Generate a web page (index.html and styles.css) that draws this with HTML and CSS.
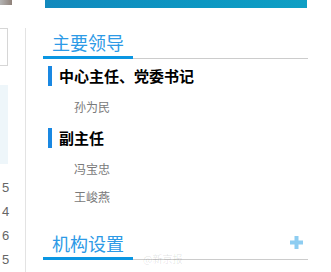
FILE: index.html
```html
<!DOCTYPE html>
<html lang="zh">
<head>
<meta charset="utf-8">
<link rel="stylesheet" href="styles.css">
</head>
<body>
<div class="page">
  <aside class="side">
    <div class="side-top"></div>
    <div class="side-body">
      <div class="side-input"></div>
      <div class="side-panel"></div>
      <ul class="side-nums">
        <li>5</li>
        <li>4</li>
        <li>6</li>
        <li>5</li>
      </ul>
    </div>
  </aside>
  <main class="main">
    <div class="banner"></div>
    <div class="head head-first">
      <h2 class="head-title">主要领导</h2>
    </div>
    <div class="cat">中心主任、党委书记</div>
    <ul class="names">
      <li>孙为民</li>
    </ul>
    <div class="cat">副主任</div>
    <ul class="names">
      <li>冯宝忠</li>
      <li>王峻燕</li>
    </ul>
    <div class="head head-second">
      <h2 class="head-title">机构设置</h2>
      <svg class="plus" width="13" height="13" viewBox="0 0 13 13"><rect x="4.5" y="0" width="4" height="13" fill="#8ecdf1"/><rect x="0" y="4.5" width="13" height="4" fill="#8ecdf1"/></svg>
      <span class="mark">@新京报</span>
    </div>
  </main>
</div>
</body>
</html>
```

FILE: styles.css
```css
* { box-sizing: border-box; }
html, body { margin: 0; padding: 0; background: #fff; }
body {
  font-family: "Noto Sans CJK SC", "Noto Sans", sans-serif;
  overflow: hidden;
  width: 331px;
  height: 272px;
}
ul { list-style: none; margin: 0; padding: 0; }
h2 { margin: 0; font-weight: normal; }

.page {
  display: flex;
  align-items: flex-start;
  gap: 17px;
}

.side {
  width: 26px;
  flex: none;
  display: flex;
  flex-direction: column;
}
.side-top {
  width: 12px;
  height: 5px;
  background: linear-gradient(90deg, #b4b4b4, #8f8179);
}
.side-body {
  margin-top: 23px;
  border-right: 1px solid #e3e3e3;
  height: 244px;
  display: flex;
  flex-direction: column;
}
.side-input {
  width: 8px;
  height: 41px;
  border: 1px solid #d6d6d6;
  border-left: none;
  background: #fff;
}
.side-panel {
  margin-top: 19px;
  width: 8px;
  height: 85px;
  background: #eef6fa;
}
.side-nums {
  margin-top: 12px;
  padding-left: 2px;
  font-family: "Liberation Sans", Arial, sans-serif;
  font-size: 13px;
  line-height: 24px;
  color: #666;
}

.main {
  width: 265px;
  flex: none;
}
.banner {
  margin-left: 2px;
  width: 262px;
  height: 8px;
  background: linear-gradient(90deg, #1289bd, #0c97c2 60%, #0f9fc4);
}

.head {
  position: relative;
  display: flex;
  align-items: flex-end;
  justify-content: space-between;
  border-bottom: 1px solid #cccccc;
}
.head-first { margin-top: 22px; }
.head-second { margin-top: 20px; }
.head-title {
  width: 90px;
  padding: 0 0 2px 9px;
  margin-bottom: -1px;
  font-size: 18px;
  line-height: 24px;
  color: #2d9ae6;
  border-bottom: 3px solid #0a96e2;
}
.plus {
  align-self: center;
  margin: 0 5px 5px 0;
}
.mark {
  position: absolute;
  left: 100px;
  top: 22px;
  font-size: 10px;
  line-height: 12px;
  color: rgba(0, 0, 0, 0.1);
}

.cat {
  margin-top: 7px;
  margin-left: 5px;
  padding-left: 7px;
  border-left: 4px solid #1a88e2;
  height: 20px;
  font-size: 15px;
  line-height: 20px;
  font-weight: bold;
  color: #000;
}
.names {
  margin-top: 7px;
  padding-left: 31px;
  font-size: 12px;
  line-height: 28px;
  color: #7a7a7a;
}
```
